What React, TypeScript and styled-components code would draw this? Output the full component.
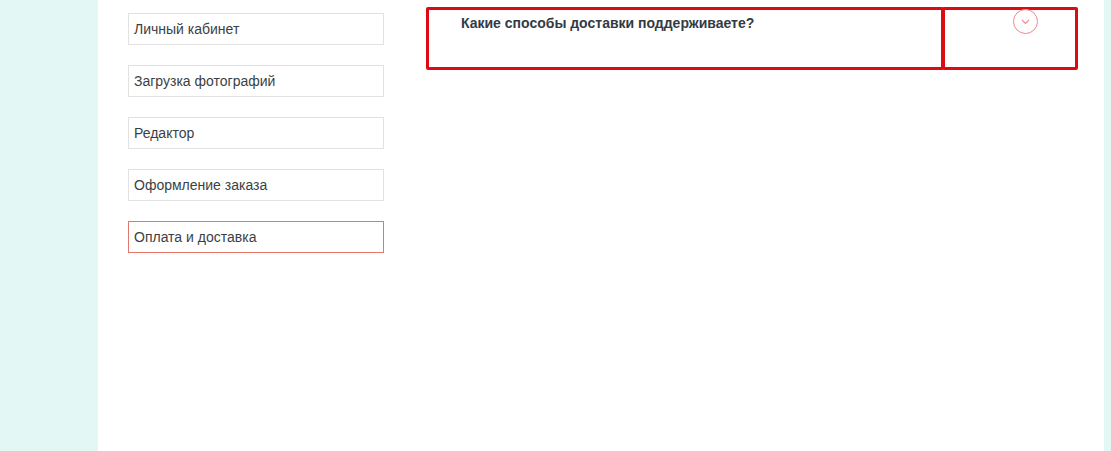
import React from "react";
import styled, { createGlobalStyle } from "styled-components";

const Global = createGlobalStyle`
  html, body { margin: 0; padding: 0; }
  body { background: #e3f7f5; font-family: "Liberation Sans", Arial, sans-serif; }
`;

const Page = styled.div`
  display: flex;
  height: 451px;
  overflow: hidden;
`;

const Gutter = styled.div`
  width: 98px;
  flex: none;
`;

const Main = styled.main`
  width: 1006px;
  flex: none;
  background: #fff;
  display: flex;
  align-items: flex-start;
  padding: 13px 0 0 30px;
  box-sizing: border-box;
`;

const Sidebar = styled.nav`
  width: 256px;
  display: flex;
  flex-direction: column;
  gap: 20px;
  flex: none;
`;

const NavItem = styled.div<{ $active?: boolean }>`
  height: 32px;
  box-sizing: border-box;
  border: 1px solid ${(p) => (p.$active ? "#e2776c" : "#e2e2e2")};
  padding: 0 5px;
  display: flex;
  align-items: center;
  font-size: 14px;
  color: #3b3f45;
`;

const Content = styled.section`
  margin: -6px 0 0 42px;
  display: flex;
`;

const Question = styled.div`
  width: 518px;
  height: 63px;
  box-sizing: border-box;
  border: 3px solid #dd0a14;
  border-radius: 2px;
  padding: 5px 0 0 32px;
  font-size: 14px;
  line-height: 16px;
  font-weight: bold;
  color: #333a45;
`;

const Toggle = styled.div`
  width: 136px;
  height: 63px;
  margin-left: -2px;
  box-sizing: border-box;
  border: 3px solid #dd0a14;
  border-radius: 2px;
  position: relative;
`;

const Circle = styled.div`
  position: absolute;
  left: 68px;
  top: -1px;
  width: 25px;
  height: 25px;
  border-radius: 50%;
  border: 1px solid #ec8a8c;
  box-sizing: border-box;
  display: flex;
  align-items: center;
  justify-content: center;
  background: #fff;
`;

const items = [
  "Личный кабинет",
  "Загрузка фотографий",
  "Редактор",
  "Оформление заказа",
  "Оплата и доставка",
];

export default function App() {
  return (
    <>
      <Global />
      <Page>
        <Gutter />
        <Main>
          <Sidebar>
            {items.map((t, i) => (
              <NavItem key={t} $active={i === items.length - 1}>
                {t}
              </NavItem>
            ))}
          </Sidebar>
          <Content>
            <Question>Какие способы доставки поддерживаете?</Question>
            <Toggle>
              <Circle>
                <svg width="9" height="6" viewBox="0 0 9 6">
                  <path d="M1 1 L4.5 4.5 L8 1" fill="none" stroke="#ec8a8c" strokeWidth="1.1" />
                </svg>
              </Circle>
            </Toggle>
          </Content>
        </Main>
        <Gutter />
      </Page>
    </>
  );
}
